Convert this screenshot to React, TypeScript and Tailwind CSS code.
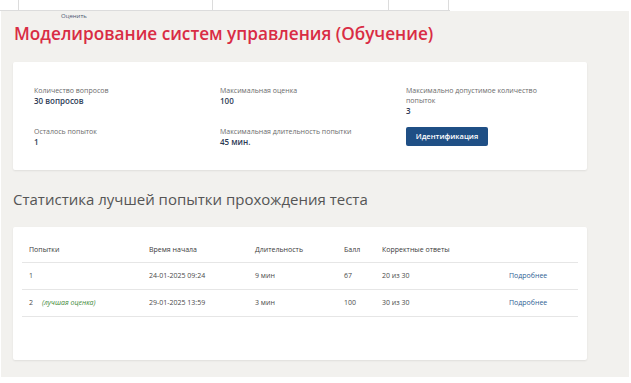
const rows = [
  {n: '1', best: false, start: '24-01-2025 09:24', dur: '9 мин', score: '67', correct: '20 из 30'},
  {n: '2', best: true, start: '29-01-2025 13:59', dur: '3 мин', score: '100', correct: '30 из 30'},
]

function InfoItem({label, value}: {label: string; value: string}) {
  return (
    <div className="pr-8">
      <p className="text-[7px] leading-[10px] text-[#6b6b6b]">{label}</p>
      <p className="text-[8px] font-semibold leading-[10px] text-[#2d3b55]">{value}</p>
    </div>
  )
}

export default function App() {
  return (
    <div className="h-[383px] w-[631px] overflow-hidden bg-white font-['Open_Sans',sans-serif]">
      <div className="flex h-[11px] w-[450px] border-b border-[#dcdcdc]">
        <div className="w-[19px] border-r border-[#dcdcdc]" />
        <div className="w-[194px] border-r border-[#dcdcdc]" />
        <div className="w-[176px] border-r border-[#dcdcdc]" />
        <div className="w-[60px] border-r border-[#dcdcdc]" />
      </div>

      <div className="ml-px h-[366px] w-[628px] bg-[#f2f1ee] pl-3">
        <p className="pl-[48px] pt-[1px] text-[6px] leading-[8px] text-[#4a5670]">Оценить</p>
        <h1 className="mt-[2px] pl-px text-[17.2px] font-semibold leading-[24px] text-[#d92c44]">
          Моделирование систем управления (Обучение)
        </h1>

        <section className="mt-[16px] h-[108px] w-[574px] rounded-[2px] bg-white pl-[21px] pt-[24px] shadow-[0_1px_2px_rgba(0,0,0,0.08)]">
          <div className="grid grid-cols-[186px_186px_1fr] grid-rows-[41px_auto]">
            <InfoItem label="Количество вопросов" value="30 вопросов" />
            <InfoItem label="Максимальная оценка" value="100" />
            <InfoItem label="Максимально допустимое количество попыток" value="3" />
            <InfoItem label="Осталось попыток" value="1" />
            <InfoItem label="Максимальная длительность попытки" value="45 мин." />
            <div>
              <button className="block h-[19px] w-[82px] rounded-[2px] bg-[#1f4f85] text-[7.5px] font-semibold text-white">
                Идентификация
              </button>
            </div>
          </div>
        </section>

        <h2 className="mt-[19px] text-[15px] leading-[20px] text-[#555555]">
          Статистика лучшей попытки прохождения теста
        </h2>

        <section className="mt-[18px] h-[133px] w-[574px] rounded-[2px] bg-white px-[9px] pt-[12px] shadow-[0_1px_2px_rgba(0,0,0,0.08)]">
          <div className="grid h-[24px] grid-cols-[120px_106px_89px_38px_127px_1fr] items-center border-b border-[#e6e6e6] px-[7px] text-[7px] text-[#3a3a3a]">
            <span>Попытки</span>
            <span>Время начала</span>
            <span>Длительность</span>
            <span>Балл</span>
            <span>Корректные ответы</span>
            <span />
          </div>
          {rows.map((r) => (
            <div
              key={r.n}
              className="grid h-[27px] grid-cols-[120px_106px_89px_38px_127px_1fr] items-center border-b border-[#e6e6e6] px-[7px] text-[7px] text-[#4a4a4a]"
            >
              <span className="flex gap-[9px]">
                {r.n}
                {r.best && <em className="text-[#3f8a3a]">(лучшая оценка)</em>}
              </span>
              <span>{r.start}</span>
              <span>{r.dur}</span>
              <span>{r.score}</span>
              <span>{r.correct}</span>
              <span className="text-[#2f5f94]">Подробнее</span>
            </div>
          ))}
        </section>
      </div>
    </div>
  )
}
